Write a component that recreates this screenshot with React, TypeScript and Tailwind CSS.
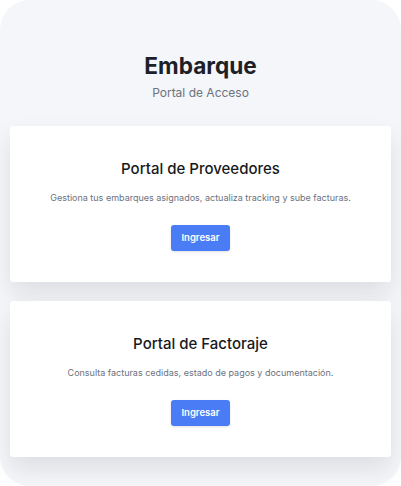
import React from 'react';

const portals = [
  {
    title: 'Portal de Proveedores',
    description: 'Gestiona tus embarques asignados, actualiza tracking y sube facturas.',
  },
  {
    title: 'Portal de Factoraje',
    description: 'Consulta facturas cedidas, estado de pagos y documentación.',
  },
];

const App: React.FC = () => {
  return (
    <div className="bg-white" style={{ fontFamily: 'Inter, "Noto Sans", sans-serif' }}>
      <div className="h-[486px] w-[401px] rounded-[30px] bg-[#f4f6f9] px-[10px] pt-[50px]">
        {/* Header */}
        <div className="text-center">
          <h1 className="text-[22.6px] font-bold leading-8 text-[#1d2127]">Embarque</h1>
          <p className="mt-px text-[12px] leading-5 text-[#6b7280]">Portal de Acceso</p>
        </div>

        {/* Portal cards */}
        <div className="mt-[23px] flex flex-col gap-[19px]">
          {portals.map((portal) => (
            <div
              key={portal.title}
              className="flex h-[156px] flex-col items-center rounded-[3px] bg-white pt-[31px] shadow-[0_12px_24px_rgba(15,23,42,0.10)]"
            >
              <h2 className="text-[15px] font-medium leading-6 text-[#18191c]">{portal.title}</h2>
              <p className="mt-[9px] text-[9px] leading-[15px] text-[#6b7280]">{portal.description}</p>
              <button className="mt-[20px] h-[26px] w-[59px] rounded-[3px] bg-[#4a7cf5] text-[9.5px] font-semibold text-white shadow-sm">
                Ingresar
              </button>
            </div>
          ))}
        </div>
      </div>
    </div>
  );
};

export default App;
